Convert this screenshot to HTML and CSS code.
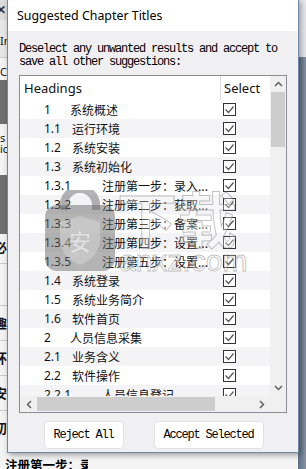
FILE: index.html
```html
<!DOCTYPE html>
<html lang="en">
<head>
    <meta charset="UTF-8">
    <title>Suggested Chapter Titles</title>
    <link rel="stylesheet" href="styles.css">
</head>
<body>
<!--后面的主程序窗口-->
<div class="app">
    <div class="app-side">
        <div class="side-top">✕</div>
        <div class="side-item tall">In</div>
        <div class="side-item">C</div>
        <div class="side-dark"></div>
        <div class="side-item note">s a<br>ic</div>
        <div class="side-dark big"></div>
        <div class="side-nav first">必</div>
        <div class="side-nav blank"></div>
        <div class="side-nav">趣</div>
        <div class="side-nav">环</div>
        <div class="side-nav">安</div>
        <div class="side-nav">初</div>
    </div>
    <div class="app-main"></div>
    <div class="app-edge"><div class="edge-top"></div></div>
    <div class="app-bottom"><span class="bottom-cell">注册第一步：录</span></div>
</div>

<!--对话框-->
<div class="dialog">
    <div class="titlebar">Suggested Chapter Titles</div>
    <div class="dlg-body">
        <p class="desc">Deselect any unwanted results and accept to<br>save all other suggestions:</p>
        <div class="listbox">
            <div class="list">
                <div class="row head"><div class="cell-h">Headings</div><div class="cell-s">Select</div></div>
                <div class="row lv1"><div class="cell-h"><span class="num">1</span><span class="txt">系统概述</span></div><div class="cell-s"><i class="check"></i></div></div>
                <div class="row lv2"><div class="cell-h"><span class="num">1.1</span><span class="txt">运行环境</span></div><div class="cell-s"><i class="check"></i></div></div>
                <div class="row lv2"><div class="cell-h"><span class="num">1.2</span><span class="txt">系统安装</span></div><div class="cell-s"><i class="check"></i></div></div>
                <div class="row lv2"><div class="cell-h"><span class="num">1.3</span><span class="txt">系统初始化</span></div><div class="cell-s"><i class="check"></i></div></div>
                <div class="row lv3"><div class="cell-h"><span class="num">1.3.1</span><span class="txt">注册第一步：录入...</span></div><div class="cell-s"><i class="check"></i></div></div>
                <div class="row lv3"><div class="cell-h"><span class="num">1.3.2</span><span class="txt">注册第二步：获取...</span></div><div class="cell-s"><i class="check"></i></div></div>
                <div class="row lv3"><div class="cell-h"><span class="num">1.3.3</span><span class="txt">注册第三步：备案...</span></div><div class="cell-s"><i class="check"></i></div></div>
                <div class="row lv3"><div class="cell-h"><span class="num">1.3.4</span><span class="txt">注册第四步：设置...</span></div><div class="cell-s"><i class="check"></i></div></div>
                <div class="row lv3"><div class="cell-h"><span class="num">1.3.5</span><span class="txt">注册第五步：设置...</span></div><div class="cell-s"><i class="check"></i></div></div>
                <div class="row lv2"><div class="cell-h"><span class="num">1.4</span><span class="txt">系统登录</span></div><div class="cell-s"><i class="check"></i></div></div>
                <div class="row lv2"><div class="cell-h"><span class="num">1.5</span><span class="txt">系统业务简介</span></div><div class="cell-s"><i class="check"></i></div></div>
                <div class="row lv2"><div class="cell-h"><span class="num">1.6</span><span class="txt">软件首页</span></div><div class="cell-s"><i class="check"></i></div></div>
                <div class="row lv1"><div class="cell-h"><span class="num">2</span><span class="txt">人员信息采集</span></div><div class="cell-s"><i class="check"></i></div></div>
                <div class="row lv2"><div class="cell-h"><span class="num">2.1</span><span class="txt">业务含义</span></div><div class="cell-s"><i class="check"></i></div></div>
                <div class="row lv2"><div class="cell-h"><span class="num">2.2</span><span class="txt">软件操作</span></div><div class="cell-s"><i class="check"></i></div></div>
                <div class="row lv3"><div class="cell-h"><span class="num">2.2.1</span><span class="txt">人员信息登记</span></div><div class="cell-s"><i class="check"></i></div></div>

                <!--水印-->
                <div class="watermark">
                    <svg class="wm-lock" width="70" height="82" viewBox="0 0 70 82">
                        <path d="M19 20 V15 a16 16 0 0 1 32 0 V20" fill="none" stroke="rgba(105,105,105,0.5)" stroke-width="8"/>
                        <rect x="0" y="15" width="70" height="66" rx="12" fill="rgba(105,105,105,0.5)"/>
                        <path d="M35 26 L55 32 V50 C55 62 45 71 35 75 C25 71 15 62 15 50 V32 Z" fill="rgba(255,255,255,0.25)"/>
                        <text x="35" y="60" text-anchor="middle" font-size="22" fill="rgba(255,255,255,0.55)" font-family="Noto Sans CJK SC, sans-serif">安</text>
                    </svg>
                    <span class="wm-big">下载</span>
                    <span class="wm-url">anxz.com</span>
                </div>
            </div>
            <div class="vscroll">
                <div class="sb-btn"><svg width="9" height="6" viewBox="0 0 9 6"><path d="M1 5 L4.5 1.5 L8 5" fill="none" stroke="#606060" stroke-width="1.5"/></svg></div>
                <div class="sb-thumb v"></div>
                <div class="sb-track"></div>
                <div class="sb-btn"><svg width="9" height="6" viewBox="0 0 9 6"><path d="M1 1 L4.5 4.5 L8 1" fill="none" stroke="#606060" stroke-width="1.5"/></svg></div>
            </div>
            <div class="hscroll">
                <div class="sb-btn"><svg width="6" height="9" viewBox="0 0 6 9"><path d="M5 1 L1.5 4.5 L5 8" fill="none" stroke="#606060" stroke-width="1.5"/></svg></div>
                <div class="sb-thumb h"></div>
                <div class="sb-track"></div>
                <div class="sb-btn"><svg width="6" height="9" viewBox="0 0 6 9"><path d="M1 1 L4.5 4.5 L1 8" fill="none" stroke="#606060" stroke-width="1.5"/></svg></div>
            </div>
            <div class="corner"></div>
        </div>
        <div class="buttons">
            <button class="btn reject">Reject All</button>
            <button class="btn accept">Accept Selected</button>
        </div>
    </div>
</div>
</body>
</html>
```

FILE: styles.css
```css
* {
    padding: 0;
    margin: 0;
    box-sizing: border-box;
}

body {
    width: 306px;
    height: 469px;
    overflow: hidden;
    position: relative;
    background: #f0f0f0;
    font-family: "Noto Sans", "Noto Sans CJK SC", sans-serif;
    color: #111;
}

/* 背景程序 */
.app {
    display: grid;
    grid-template-columns: 7px 1fr 8px;
    grid-template-rows: 455px 14px;
    height: 469px;
}

.app-side {
    background: #f3f3f3;
    overflow: hidden;
    font-size: 11px;
    line-height: 11px;
}

.side-top {
    height: 20px;
    background: #dcdcdc;
    color: #333;
    font-weight: bold;
    font-size: 12px;
    padding-top: 4px;
    margin-left: -4px;
}

.side-item {
    height: 23px;
    padding-top: 8px;
    border-top: 1px solid #cfcfcf;
    white-space: nowrap;
}

.side-item.tall {
    height: 37px;
    padding-top: 15px;
    background: #e6e6e6;
    border-top: 0;
}

.side-item.note {
    height: 51px;
    padding-top: 8px;
    border-top: 0;
}

.side-dark {
    height: 44px;
    background: #6f6f6f;
}

.side-dark.big {
    height: 59px;
}

.side-nav {
    height: 35px;
    border-top: 1px solid #c9c9c9;
    font-size: 13px;
    font-weight: bold;
    line-height: 35px;
    margin-left: -6px;
    white-space: nowrap;
}

.side-nav.first {
    height: 29px;
    line-height: 26px;
    border-top: 0;
}

.side-nav.blank {
    height: 42px;
}

.app-main {
    background: #f0f0f0;
}

.app-edge {
    grid-row: 1 / 3;
    grid-column: 3;
    background: linear-gradient(to right, #5d7089, #8792a2);
}

.edge-top {
    height: 57px;
    background: #e9e9eb;
}

.app-bottom {
    grid-column: 1 / 3;
    background: #f4f4f4;
    padding: 1px 0 0 5px;
    overflow: hidden;
}

.bottom-cell {
    display: block;
    width: 83px;
    overflow: hidden;
    font-size: 12.5px;
    line-height: 20px;
    font-weight: bold;
    white-space: nowrap;
    color: #000;
}

/* 对话框 */
.dialog {
    position: absolute;
    left: 7px;
    top: -1px;
    width: 292px;
    border: 1px solid #6f88a6;
    background: #f0f0f2;
    box-shadow: 2px 2px 6px rgba(0, 0, 0, 0.35);
}

.titlebar {
    height: 31px;
    background: #fff;
    padding-left: 9px;
    font-size: 12.4px;
    line-height: 31px;
    color: #000;
}

.dlg-body {
    padding: 12px 10px 3px 11px;
}

.desc {
    font-family: "Liberation Mono", monospace;
    font-size: 12px;
    letter-spacing: -1.2px;
    line-height: 13px;
    color: #000;
    white-space: nowrap;
}

.listbox {
    margin-top: 6px;
    width: 268px;
    height: 338px;
    border: 1px solid #8c8c94;
    background: #fff;
    display: grid;
    grid-template-columns: 250px 16px;
    grid-template-rows: 320px 16px;
}

.list {
    position: relative;
    overflow: hidden;
}

.row {
    display: grid;
    grid-template-columns: 200px 50px;
    height: 19px;
    align-items: center;
    font-size: 12px;
    white-space: nowrap;
}

.row:nth-child(odd) {
    background: #f4f4f6;
}

.row.head {
    height: 24px;
    background: #fff;
    font-size: 13px;
}

.row.head .cell-h {
    padding-left: 4px;
}

.row.head .cell-s {
    height: 24px;
    line-height: 24px;
    border-left: 1px solid #dcdcdc;
    padding-left: 3px;
}

.cell-h {
    display: flex;
    align-items: center;
    padding-left: 24px;
    overflow: hidden;
}

.cell-s {
    padding-left: 3px;
    display: flex;
    align-items: center;
}

.num {
    flex: none;
    width: 26px;
}

.lv2 .num {
    width: 28px;
}

.lv3 .num {
    width: 58px;
}

.txt {
    font-family: "Noto Sans CJK SC", sans-serif;
}

.check {
    display: block;
    width: 13px;
    height: 13px;
    border: 1px solid #333;
    background: #fff url("data:image/svg+xml,%3Csvg xmlns='http://www.w3.org/2000/svg' width='11' height='11'%3E%3Cpath d='M1.5 5.5 L4.5 8.5 L9.5 2.5' fill='none' stroke='%23555' stroke-width='1.2'/%3E%3C/svg%3E") no-repeat center;
}

.watermark {
    position: absolute;
    left: 25px;
    top: 114px;
    width: 240px;
    height: 84px;
}

.wm-lock {
    position: absolute;
    left: 0;
    top: 0;
}

.wm-big {
    position: absolute;
    left: 72px;
    top: -8px;
    font-family: "Noto Sans CJK SC", sans-serif;
    font-size: 60px;
    line-height: 70px;
    font-weight: bold;
    color: rgba(255, 255, 255, 0.3);
    -webkit-text-stroke: 1px rgba(120, 120, 120, 0.45);
}

.wm-url {
    position: absolute;
    left: 74px;
    top: 56px;
    font-family: "Liberation Sans", sans-serif;
    font-size: 30px;
    line-height: 30px;
    color: rgba(255, 255, 255, 0.3);
    -webkit-text-stroke: 1px rgba(120, 120, 120, 0.45);
}

/* 滚动条 */
.vscroll {
    display: flex;
    flex-direction: column;
    background: #f0f0f0;
}

.hscroll {
    display: flex;
    background: #f0f0f0;
}

.corner {
    background: #f0f0f0;
}

.sb-btn {
    flex: none;
    width: 16px;
    height: 16px;
    display: flex;
    align-items: center;
    justify-content: center;
}

.hscroll .sb-btn {
    width: 17px;
}

.sb-thumb {
    flex: none;
    background: #cdcdcd;
}

.sb-thumb.v {
    height: 55px;
    margin: 0 1px;
}

.sb-thumb.h {
    width: 178px;
    margin: 1px 0;
}

.sb-track {
    flex: 1;
}

/* 按钮 */
.buttons {
    display: flex;
    justify-content: center;
    gap: 30px;
    margin-top: 8px;
}

.btn {
    height: 28px;
    background: #fff;
    border: 1px solid #e2e2e4;
    border-radius: 4px;
    font-family: "Liberation Mono", monospace;
    font-size: 12px;
    letter-spacing: -1.2px;
    color: #000;
}

.btn.reject {
    width: 80px;
}

.btn.accept {
    width: 110px;
}
```
